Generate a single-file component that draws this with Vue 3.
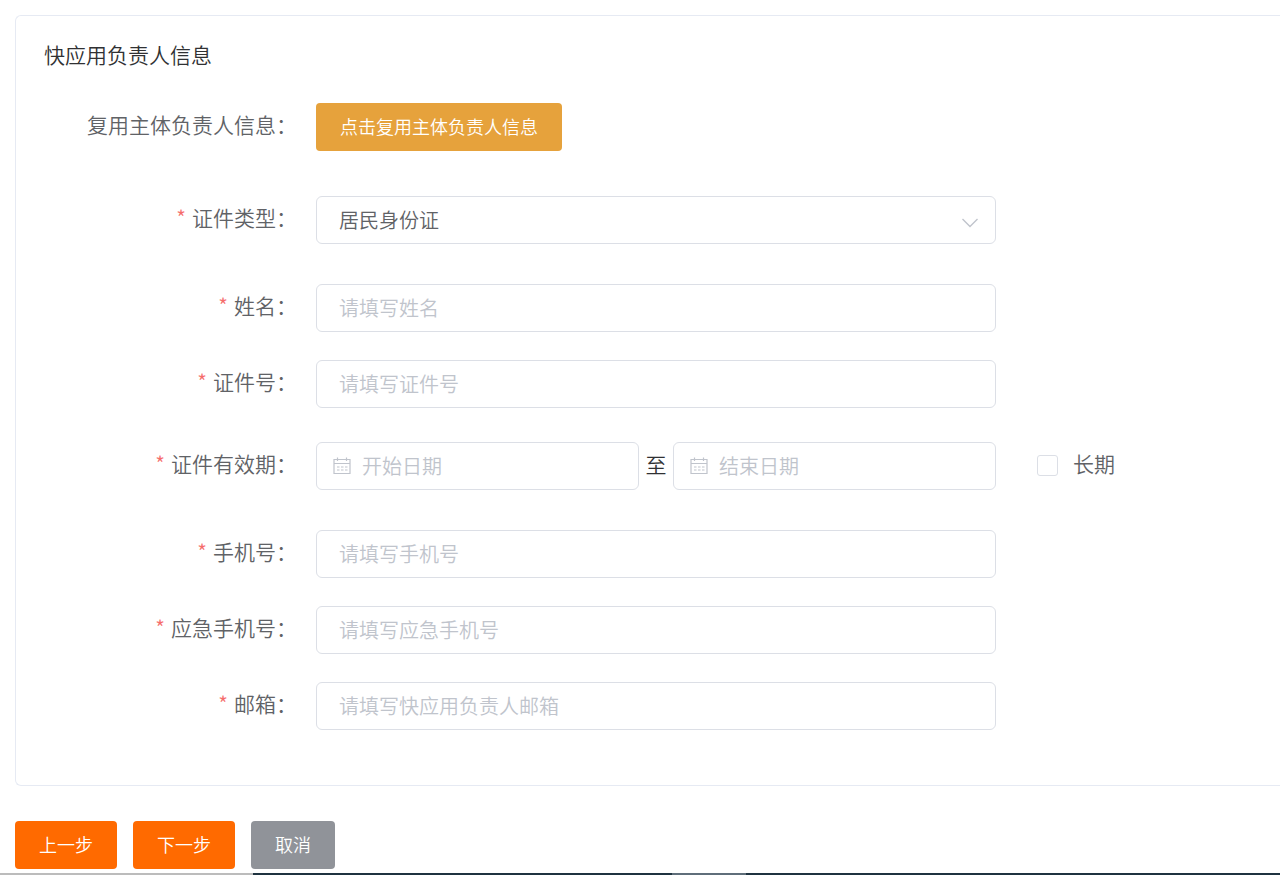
<script setup>
import { reactive } from 'vue'

const form = reactive({
  idType: '居民身份证',
  name: '',
  idNumber: '',
  startDate: '',
  endDate: '',
  longTerm: false,
  phone: '',
  emergencyPhone: '',
  email: '',
})
</script>

<template>
  <main class="page">
    <form class="form" @submit.prevent>
      <section class="card">
        <h2 class="title">快应用负责人信息</h2>

        <div class="row row-wide">
          <span class="label">复用主体负责人信息：</span>
          <button type="button" class="btn btn-warning">点击复用主体负责人信息</button>
        </div>

        <div class="row row-loose">
          <label class="label required" for="id-type">证件类型：</label>
          <div class="field">
            <select id="id-type" v-model="form.idType" class="control">
              <option>居民身份证</option>
            </select>
            <svg class="arrow" viewBox="0 0 18 10" aria-hidden="true">
              <path d="M1.5 1 L9 8.5 L16.5 1" />
            </svg>
          </div>
        </div>

        <div class="row">
          <label class="label required" for="name">姓名：</label>
          <div class="field">
            <input id="name" v-model="form.name" class="control" type="text" placeholder="请填写姓名" />
          </div>
        </div>

        <div class="row row-date">
          <label class="label required" for="id-number">证件号：</label>
          <div class="field">
            <input id="id-number" v-model="form.idNumber" class="control" type="text" placeholder="请填写证件号" />
          </div>
        </div>

        <div class="row row-loose">
          <label class="label required" for="start-date">证件有效期：</label>
          <div class="field range">
            <div class="date">
              <svg class="calendar" viewBox="0 0 18 18" aria-hidden="true">
                <path d="M1 2.5 H17 V16.5 H1 Z M1 6.5 H17 M4.5 0.5 V4 M13.5 0.5 V4" />
                <path d="M4 10 H6.5 M8 10 H10.5 M12 10 H14.5 M4 13 H6.5 M8 13 H10.5 M12 13 H14.5" />
              </svg>
              <input id="start-date" v-model="form.startDate" class="control" type="text" placeholder="开始日期" />
            </div>
            <label class="to" for="end-date">至</label>
            <div class="date">
              <svg class="calendar" viewBox="0 0 18 18" aria-hidden="true">
                <path d="M1 2.5 H17 V16.5 H1 Z M1 6.5 H17 M4.5 0.5 V4 M13.5 0.5 V4" />
                <path d="M4 10 H6.5 M8 10 H10.5 M12 10 H14.5 M4 13 H6.5 M8 13 H10.5 M12 13 H14.5" />
              </svg>
              <input id="end-date" v-model="form.endDate" class="control" type="text" placeholder="结束日期" />
            </div>
          </div>
          <label class="check">
            <input v-model="form.longTerm" type="checkbox" />
            <span class="check-text">长期</span>
          </label>
        </div>

        <div class="row">
          <label class="label required" for="phone">手机号：</label>
          <div class="field">
            <input id="phone" v-model="form.phone" class="control" type="text" placeholder="请填写手机号" />
          </div>
        </div>

        <div class="row">
          <label class="label required" for="emergency-phone">应急手机号：</label>
          <div class="field">
            <input id="emergency-phone" v-model="form.emergencyPhone" class="control" type="text" placeholder="请填写应急手机号" />
          </div>
        </div>

        <div class="row">
          <label class="label required" for="email">邮箱：</label>
          <div class="field">
            <input id="email" v-model="form.email" class="control" type="text" placeholder="请填写快应用负责人邮箱" />
          </div>
        </div>
      </section>

      <div class="actions">
        <button type="button" class="btn btn-primary">上一步</button>
        <button type="submit" class="btn btn-primary">下一步</button>
        <button type="button" class="btn btn-info">取消</button>
      </div>
    </form>
    <div class="strip" aria-hidden="true">
      <span class="strip-light"></span>
      <span class="strip-dark"></span>
      <span class="strip-mid"></span>
      <span class="strip-dark strip-rest"></span>
    </div>
  </main>
</template>

<style>
body {
  margin: 0;
  background: #fff;
}
</style>

<style scoped>
.page {
  font-family: "Noto Sans CJK SC", sans-serif;
  font-weight: 350;
  font-size: 21px;
  color: #303133;
  overflow: hidden;
}
.form {
  padding: 15px 0 4px 15px;
}
.card {
  box-sizing: border-box;
  border: 1px solid #e6eaf3;
  border-right: 0;
  border-radius: 6px 0 0 6px;
  padding: 22px 28px 27px;
}
.title {
  margin: 0 0 33px;
  font-size: 21px;
  line-height: 32px;
  font-weight: inherit;
}
.row {
  display: flex;
  align-items: center;
  margin-bottom: 28px;
}
.row-wide {
  margin-bottom: 45px;
}
.row-loose {
  margin-bottom: 40px;
}
.row-date {
  margin-bottom: 34px;
}
.label {
  flex: 0 0 253px;
  line-height: 42px;
  padding-bottom: 6px;
  margin-right: 19px;
  text-align: right;
  color: #606266;
  white-space: nowrap;
}
.required::before {
  content: "*";
  margin-right: 6px;
  color: #f56c6c;
}
.field {
  position: relative;
  flex: 0 1 680px;
  min-width: 0;
}
.control {
  display: block;
  box-sizing: border-box;
  width: 100%;
  height: 48px;
  padding: 0 22px 2px;
  border: 1px solid #dcdfe6;
  border-radius: 6px;
  background: #fff;
  color: #606266;
  font: inherit;
  font-size: 20px;
  outline: none;
  appearance: none;
}
.control:focus {
  border-color: #ff6a00;
}
.control::placeholder {
  color: #c0c4cc;
  opacity: 1;
}
.arrow {
  position: absolute;
  right: 17px;
  top: 22px;
  width: 18px;
  height: 10px;
  fill: none;
  stroke: #c0c4cc;
  stroke-width: 1.4;
  pointer-events: none;
}
.range {
  display: flex;
  align-items: center;
}
.date {
  position: relative;
  flex: 1;
  min-width: 0;
}
.date .control {
  padding-left: 45px;
}
.calendar {
  position: absolute;
  left: 17px;
  top: 15px;
  width: 18px;
  height: 18px;
  fill: none;
  stroke: #c0c4cc;
  stroke-width: 1.2;
}
.to,
.check-text {
  line-height: 42px;
  padding-bottom: 4px;
}
.to {
  flex: 0 0 34px;
  text-align: center;
}
.check {
  display: flex;
  align-items: center;
  gap: 15px;
  margin-left: 41px;
  padding-bottom: 2px;
  color: #606266;
  white-space: nowrap;
}
.check input {
  width: 21px;
  height: 21px;
  margin: 0;
  border: 1px solid #dcdfe6;
  border-radius: 3px;
  background: #fff;
  appearance: none;
}
.check input:checked {
  border-color: #ff6a00;
  background: #ff6a00;
}
.btn {
  height: 48px;
  padding: 0 24px 2px;
  border: 0;
  border-radius: 4px;
  color: #fff;
  font: inherit;
  font-size: 18px;
  white-space: nowrap;
  cursor: pointer;
}
.btn-warning {
  background: #e6a23c;
}
.btn-primary {
  background: #ff6a00;
}
.btn-info {
  background: #909399;
}
.actions {
  display: flex;
  gap: 16px;
  margin-top: 35px;
}
.strip {
  display: flex;
  height: 2px;
}
.strip-light {
  flex: 0 0 253px;
  background: #bcbcbc;
}
.strip-dark {
  flex: 0 0 419px;
  background: #1f3340;
}
.strip-mid {
  flex: 0 0 74px;
  background: #5f6e7a;
}
.strip-rest {
  flex: 1;
}
</style>
